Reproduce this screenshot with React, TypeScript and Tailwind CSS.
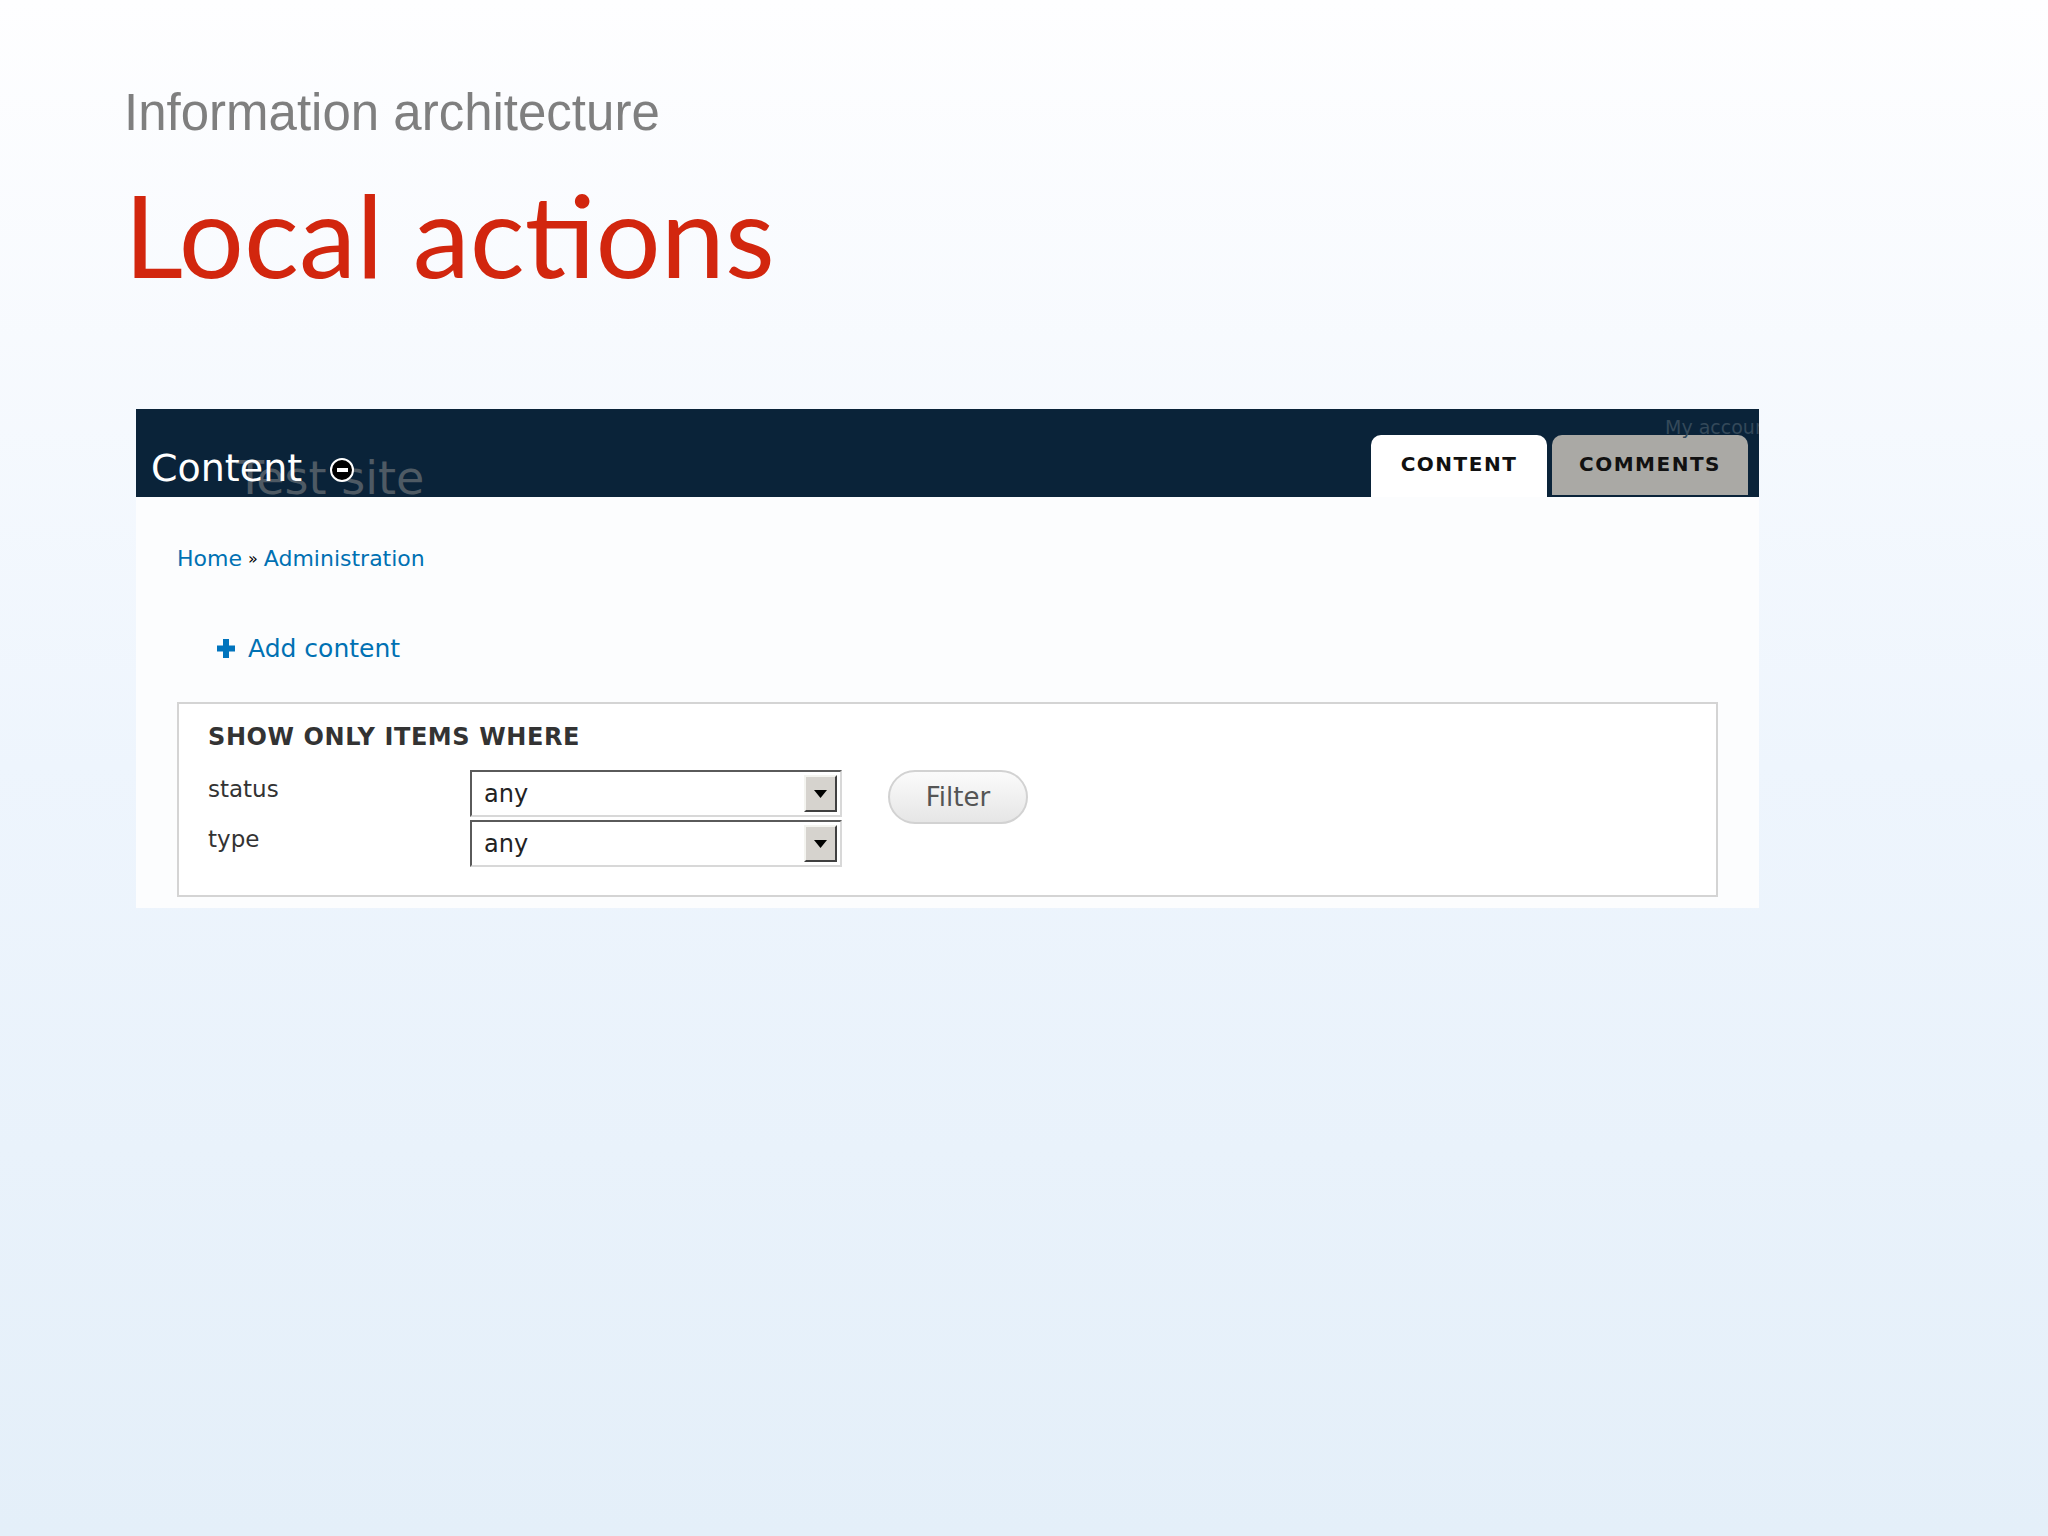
import React from 'react';

const ui = { fontFamily: '"DejaVu Sans", Verdana, sans-serif' };

const SelectBox = ({ value }: { value: string }) => (
    <div className="flex h-[47px] w-[372px] items-center border-2 border-t-[#5a5a5a] border-l-[#5a5a5a] border-r-[#d8d8d8] border-b-[#d8d8d8] bg-white pl-[12px] pr-[3px]">
        <span className="flex-1 text-[24px] text-[#222]">{value}</span>
        <div className="flex h-[37px] w-[33px] items-center justify-center border-2 border-t-[#f4f4f0] border-l-[#f4f4f0] border-r-[#404040] border-b-[#404040] bg-[#d6d3ce]">
            <svg width="13" height="8" viewBox="0 0 13 8">
                <path d="M0 0 H13 L6.5 8 Z" fill="#000" />
            </svg>
        </div>
    </div>
);

const App = () => {
    return (
        <div className="relative h-[1536px] w-[2048px] overflow-hidden bg-gradient-to-b from-[#fefeff] via-[#eef5fd] to-[#e4eff9]">
            <div className="pl-[124px] pt-[87px]">
                <div className="text-[51px] leading-none text-[#7f7f7f]" style={{ fontFamily: '"Liberation Sans", Arial, sans-serif' }}>
                    Information architecture
                </div>
                <div className="mt-[38px] text-[115px] leading-none text-[#d2260e]" style={{ fontFamily: 'Lato, "Open Sans", sans-serif' }}>
                    Local actions
                </div>
            </div>

            {/* screenshot of the admin page */}
            <div className="ml-[136px] mt-[118px] w-[1623px] bg-[#fcfdfe]" style={ui}>
                <div className="relative flex h-[88px] items-end overflow-hidden bg-[#0a2339]">
                    <span className="absolute left-[100px] top-[46px] text-[46px] leading-none text-[#4e5a64]">Test site</span>
                    <div className="relative flex items-center pb-[10px] pl-[15px]">
                        <span className="text-[38px] leading-none text-white">Content</span>
                        <span className="ml-[28px] mt-[4px] flex h-[24px] w-[24px] items-center justify-center rounded-full border-2 border-white bg-black">
                            <span className="h-[4px] w-[11px] bg-white" />
                        </span>
                    </div>
                    <span className="absolute left-[1529px] top-[9px] whitespace-nowrap text-[19px] leading-none text-[#34495a]">My account</span>
                    <div className="ml-auto mr-[11px] flex items-end gap-[5px]">
                        <div className="flex h-[62px] w-[176px] items-center justify-center rounded-t-[10px] bg-white pb-[4px] text-[20px] font-bold tracking-[1.5px] text-[#111]">
                            CONTENT
                        </div>
                        <div className="mb-[2px] flex h-[60px] w-[196px] items-center justify-center rounded-t-[10px] bg-[#aaa9a5] pb-[2px] text-[20px] font-bold tracking-[1.5px] text-[#111]">
                            COMMENTS
                        </div>
                    </div>
                </div>

                <div className="px-[41px] pb-[11px] pt-[51px]">
                    <div className="flex items-center gap-[6px] text-[22px] leading-none text-[#0071b3]">
                        <span>Home</span>
                        <span className="text-[16px] text-black">»</span>
                        <span>Administration</span>
                    </div>

                    <div className="ml-[40px] mt-[66px] flex items-center gap-[13px] text-[25px] leading-none text-[#0071b3]">
                        <svg width="18" height="19" viewBox="0 0 18 19">
                            <path d="M6 0 H12 V6.5 H18 V12.5 H12 V19 H6 V12.5 H0 V6.5 H6 Z" fill="#0074bd" />
                        </svg>
                        <span>Add content</span>
                    </div>

                    <div className="mt-[41px] h-[195px] border-2 border-[#d4d4d4] bg-white px-[29px] pt-[21px]">
                        <div className="text-[24px] font-semibold leading-none tracking-[0.6px] text-[#333]">SHOW ONLY ITEMS WHERE</div>
                        <div className="mt-[21px] flex items-start">
                            <div className="flex w-[262px] flex-col gap-[27px] pt-[8px] text-[23px] leading-none text-[#333]">
                                <span>status</span>
                                <span>type</span>
                            </div>
                            <div className="flex flex-col gap-[3px]">
                                <SelectBox value="any" />
                                <SelectBox value="any" />
                            </div>
                            <button className="ml-[46px] flex h-[54px] w-[140px] items-center justify-center rounded-full border-2 border-[#d2d2d2] bg-gradient-to-b from-[#fbfbfb] to-[#e6e6e6] text-[26px] text-[#555]">
                                Filter
                            </button>
                        </div>
                    </div>
                </div>
            </div>
        </div>
    );
};

export default App;
